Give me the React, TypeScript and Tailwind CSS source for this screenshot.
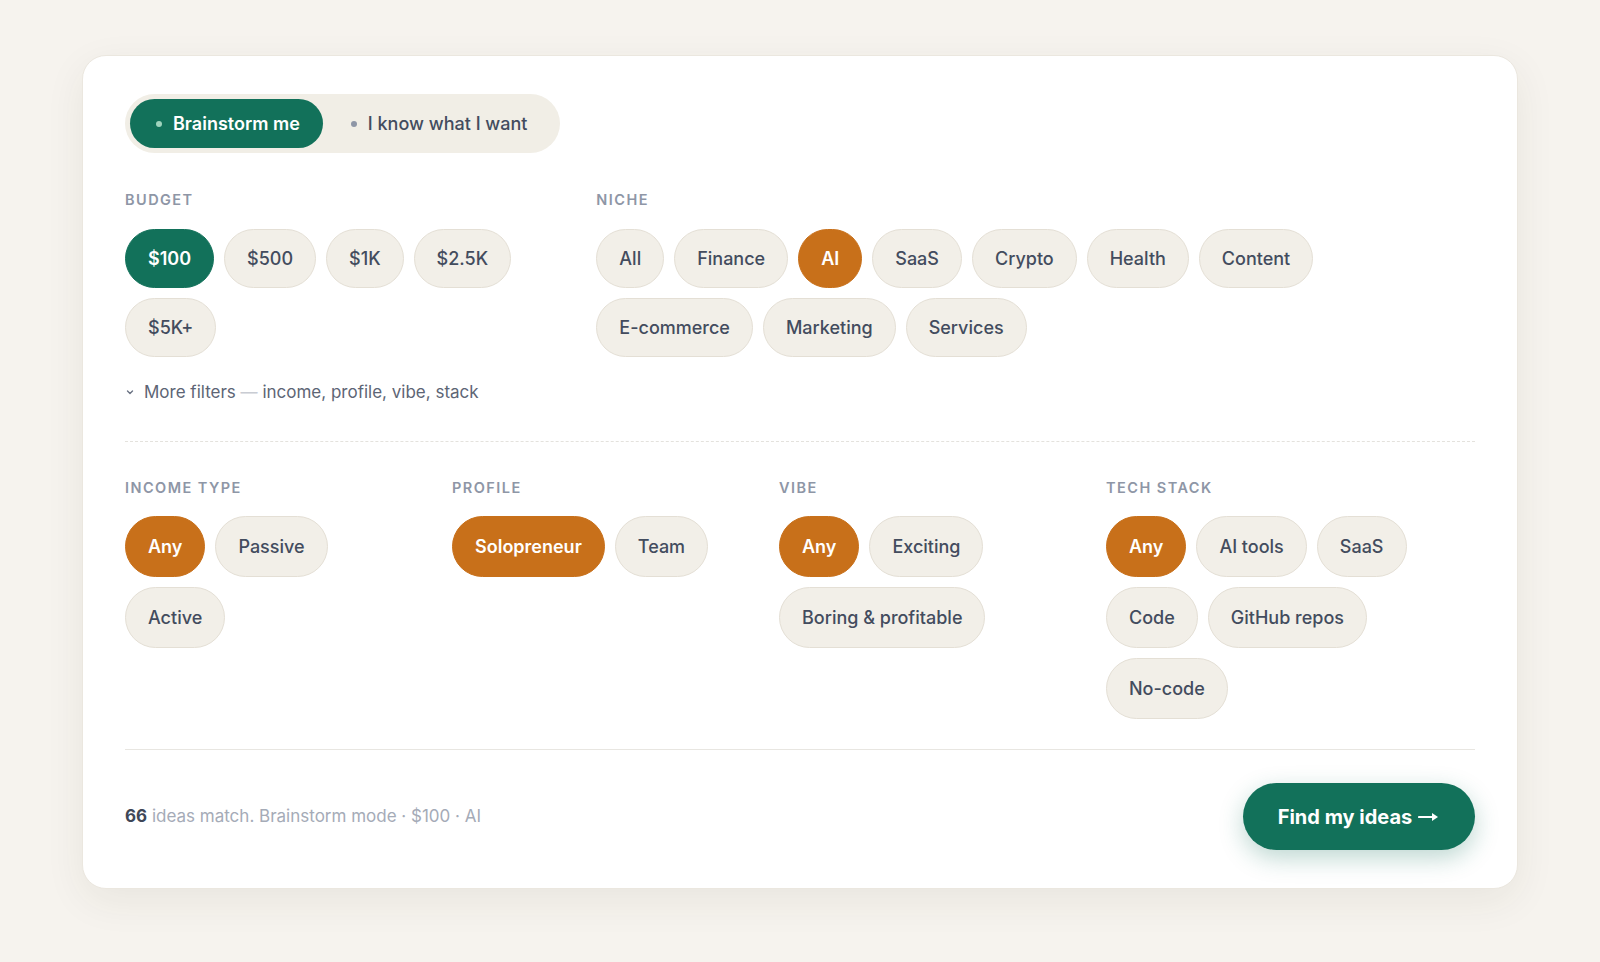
import React from "react";

type ChipProps = { label: string; active?: "green" | "orange"; tall?: boolean };

function Chip({ label, active, tall }: ChipProps) {
  const base =
    "flex items-center justify-center rounded-full px-[22px] text-[18px] font-medium whitespace-nowrap border";
  const h = tall ? " h-[61px]" : " h-[59px]";
  let color = " bg-[#f2efe8] border-[#e4dfd5] text-[#434c5e]";
  if (active === "green") color = " bg-[#12715a] border-[#12715a] text-white font-semibold";
  if (active === "orange") color = " bg-[#c8701a] border-[#c8701a] text-white font-semibold";
  return <div className={base + h + color}>{label}</div>;
}

function Label({ children }: { children: React.ReactNode }) {
  return (
    <div className="text-[14.5px] leading-5 font-semibold tracking-[0.1em] uppercase text-[#8e96a6]">
      {children}
    </div>
  );
}

function Group({
  label,
  items,
  active,
  tall,
  color,
  mb,
}: {
  label: string;
  items: string[];
  active: string;
  tall?: boolean;
  color: "green" | "orange";
  mb: string;
}) {
  return (
    <div>
      <div className={mb}>
        <Label>{label}</Label>
      </div>
      <div className="flex flex-wrap gap-[10px]">
        {items.map((i) => (
          <Chip key={i} label={i} tall={tall} active={i === active ? color : undefined} />
        ))}
      </div>
    </div>
  );
}

export default function App() {
  return (
    <div
      className="min-h-screen w-full bg-[#f6f3ee] pt-[55px]"
      style={{ fontFamily: "Inter, 'Noto Sans', sans-serif" }}
    >
      <div className="mx-auto w-[1436px] rounded-[24px] border border-[#ebe7df] bg-white px-[42px] pt-[38px] pb-[38px] shadow-[0_12px_40px_rgba(60,50,30,0.07)]">
        {/* mode toggle */}
        <div className="inline-flex items-center gap-[6px] rounded-full bg-[#f1eee6] p-[5px]">
          <div className="flex h-[49px] items-center gap-[11px] rounded-full bg-[#12715a] pl-[26px] pr-[23px] text-[18px] font-semibold text-white">
            <span className="h-[6px] w-[6px] rounded-full bg-[#9fd3bd]" />
            Brainstorm me
          </div>
          <div className="flex h-[49px] items-center gap-[11px] pl-[22px] pr-[28px] text-[18px] font-medium text-[#434c5e]">
            <span className="h-[6px] w-[6px] rounded-full bg-[#8e96a6]" />I know what I want
          </div>
        </div>

        {/* budget & niche */}
        <div className="mt-[37px] grid grid-cols-[1fr_2fr] gap-x-[32px]">
          <Group
            label="Budget"
            items={["$100", "$500", "$1K", "$2.5K", "$5K+"]}
            active="$100"
            color="green"
            mb="mb-[19px]"
          />
          <Group
            label="Niche"
            items={[
              "All",
              "Finance",
              "AI",
              "SaaS",
              "Crypto",
              "Health",
              "Content",
              "E-commerce",
              "Marketing",
              "Services",
            ]}
            active="AI"
            color="orange"
            mb="mb-[19px]"
          />
        </div>

        {/* more filters */}
        <div className="mt-[23px] flex items-center gap-[9px] text-[17px] leading-6 text-[#5d6575]">
          <svg width="10" height="10" viewBox="0 0 10 10" fill="none">
            <path d="M2.5 4l2.5 2.5L7.5 4" stroke="#6b7384" strokeWidth="1.4" strokeLinecap="round" strokeLinejoin="round" />
          </svg>
          <span>
            More filters <span className="text-[#c9ccd3]">—</span> income, profile, vibe, stack
          </span>
        </div>

        <div className="mt-[37px] border-t-[1.5px] border-dashed border-[#e4e2dd]" />

        {/* extra filters */}
        <div className="mt-[36px] grid grid-cols-[repeat(4,310px)] gap-x-[17px]">
          <Group label="Income type" items={["Any", "Passive", "Active"]} active="Any" color="orange" tall mb="mb-[18px]" />
          <Group label="Profile" items={["Solopreneur", "Team"]} active="Solopreneur" color="orange" tall mb="mb-[18px]" />
          <Group
            label="Vibe"
            items={["Any", "Exciting", "Boring & profitable"]}
            active="Any"
            color="orange"
            tall
            mb="mb-[18px]"
          />
          <Group
            label="Tech stack"
            items={["Any", "AI tools", "SaaS", "Code", "GitHub repos", "No-code"]}
            active="Any"
            color="orange"
            tall
            mb="mb-[18px]"
          />
        </div>

        <div className="mt-[30px] border-t border-[#e8e6e1]" />

        {/* footer */}
        <div className="mt-[33px] flex items-center justify-between">
          <div className="text-[17px] text-[#a5abb7]">
            <span className="font-bold text-[#3e4758]">66</span> ideas match. Brainstorm mode · $100 · AI
          </div>
          <button className="flex h-[67px] w-[232px] items-center justify-center gap-[6px] rounded-full bg-[#12715a] text-[20px] font-bold text-white shadow-[0_8px_24px_rgba(18,113,90,0.28)]">
            Find my ideas
            <svg width="22" height="12" viewBox="0 0 22 12" fill="none">
              <path d="M1 6h15" stroke="white" strokeWidth="2.2" strokeLinecap="round" />
              <path d="M14 2l6 4-6 4z" fill="white" />
            </svg>
          </button>
        </div>
      </div>
    </div>
  );
}
